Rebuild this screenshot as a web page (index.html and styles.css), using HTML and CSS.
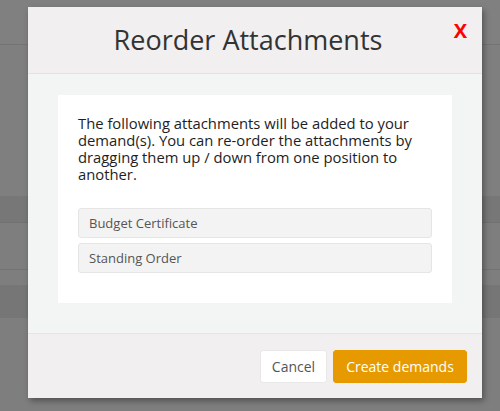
FILE: index.html
```html
<!DOCTYPE html>
<html>
<head>
<meta charset="utf-8">
<link rel="stylesheet" href="styles.css">
</head>
<body>
<div class="page">
  <div class="row r-top"></div>
  <div class="row r-gap1"></div>
  <div class="row r-head"></div>
  <div class="row r-a"></div>
  <div class="row r-b"></div>
  <div class="row r-c"></div>
  <div class="row r-rest"></div>
</div>
<div class="modal">
  <div class="modal-header">
    <h1 class="modal-title">Reorder Attachments</h1>
    <span class="close">X</span>
  </div>
  <div class="modal-body">
    <div class="panel">
      <p class="intro">The following attachments will be added to your demand(s). You can re-order the attachments by dragging them up / down from one position to another.</p>
      <ul class="attach-list">
        <li class="attach-item">Budget Certificate</li>
        <li class="attach-item">Standing Order</li>
      </ul>
    </div>
  </div>
  <div class="modal-footer">
    <button class="btn btn-cancel">Cancel</button>
    <button class="btn btn-primary">Create demands</button>
  </div>
</div>
</body>
</html>
```
FILE: styles.css
```css
html, body {
  margin: 0;
  padding: 0;
}
body {
  width: 500px;
  height: 411px;
  overflow: hidden;
  background: #7f7f7f;
  font-family: "Open Sans", "Liberation Sans", sans-serif;
  position: relative;
}
.page {
  display: flex;
  flex-direction: column;
}
.row { width: 100%; }
.r-top { height: 44px; background: #808080; border-bottom: 1px solid #747474; }
.r-gap1 { height: 151px; background: #7f7f7f; }
.r-head { height: 26px; background: #777777; border-bottom: 1px solid #717171; }
.r-a { height: 46px; background: #7e7e7e; border-bottom: 1px solid #747474; }
.r-b { height: 15px; background: #7e7e7e; }
.r-c { height: 33px; background: #767676; }
.r-rest { height: 94px; background: #7e7e7e; }

.modal {
  position: absolute;
  left: 28px;
  top: 7px;
  width: 454px;
  background: #f1eff0;
  box-shadow: 2px 3px 6px rgba(0,0,0,0.35);
  display: flex;
  flex-direction: column;
}
.modal-header {
  height: 66px;
  border-bottom: 1px solid #e2e2e2;
  display: flex;
  align-items: center;
  justify-content: center;
  position: relative;
  padding-right: 14px;
}
.modal-title {
  margin: 0;
  font-size: 27px;
  font-weight: 400;
  color: #333333;
  line-height: 30px;
}
.close {
  position: absolute;
  right: 15px;
  top: 12px;
  color: #ff0000;
  font-weight: 700;
  font-size: 20px;
  line-height: 24px;
}
.modal-body {
  background: #f3f4f4;
  padding: 21px 30px 30px;
  border-bottom: 1px solid #e4e4e4;
}
.panel {
  background: #ffffff;
  padding: 20px 20px 30px;
}
.intro {
  margin: 0 0 25px;
  font-size: 14.8px;
  line-height: 17px;
  color: #1e1e1e;
}
.attach-list {
  list-style: none;
  margin: 0;
  padding: 0;
  display: flex;
  flex-direction: column;
  gap: 5px;
}
.attach-item {
  height: 28px;
  line-height: 28px;
  background: #f3f3f3;
  border: 1px solid #e5e5e5;
  border-radius: 3px;
  padding: 0 10px;
  font-size: 13px;
  color: #555555;
}
.modal-footer {
  height: 64px;
  display: flex;
  align-items: center;
  justify-content: flex-end;
  gap: 6px;
  padding: 0 15px;
}
.btn {
  font-family: "Open Sans", "Liberation Sans", sans-serif;
  font-size: 14px;
  height: 33px;
  border-radius: 3px;
  cursor: pointer;
}
.btn-cancel {
  background: #ffffff;
  border: 1px solid #e8e8e8;
  color: #555555;
  width: 67px;
}
.btn-primary {
  background: #e69a00;
  border: 1px solid #e69a00;
  color: #ffffff;
  width: 134px;
}
```
